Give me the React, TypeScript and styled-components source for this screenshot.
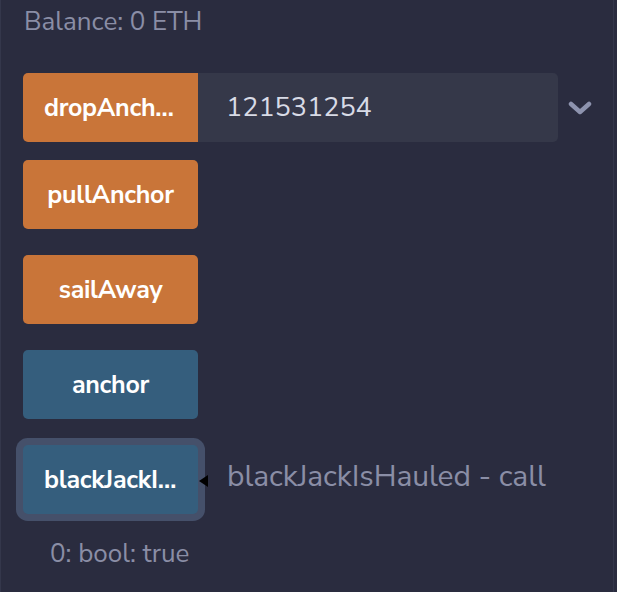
import React from "react";
import styled, { createGlobalStyle, css } from "styled-components";

const Global = createGlobalStyle`
  html, body { margin: 0; padding: 0; background: #2a2c3f; }
  body { font-family: "Nunito Sans", Lato, "Noto Sans", sans-serif; }
`;

const Panel = styled.div`
  box-sizing: border-box;
  width: 614px;
  height: 592px;
  background: #2a2c3f;
  border-left: 1px solid #34374b;
  border-right: 1px solid #34374b;
  padding: 7px 0 0 22px;
  display: flex;
  flex-direction: column;
`;

const Balance = styled.div`
  color: #8a8ea6;
  font-size: 26px;
  line-height: 30px;
  margin-left: 1px;
  margin-bottom: 36px;
`;

const List = styled.div`
  display: flex;
  flex-direction: column;
  gap: 26px;
`;

const Row = styled.div<{ $tight?: boolean }>`
  display: flex;
  align-items: center;
  height: 69px;
  ${(p) => p.$tight && css`margin-bottom: -8px;`}
`;

const ActionButton = styled.button<{ $kind: "tx" | "call"; $focused?: boolean; $joined?: boolean }>`
  box-sizing: border-box;
  width: 175px;
  height: 69px;
  flex: none;
  border: none;
  border-radius: ${(p) => (p.$joined ? "5px 0 0 5px" : "5px")};
  background: ${(p) => (p.$kind === "tx" ? "#c97539" : "#355e7d")};
  color: #ffffff;
  font-family: inherit;
  font-weight: 700;
  font-size: 25px;
  letter-spacing: -0.3px;
  padding: 0 21px;
  white-space: nowrap;
  overflow: hidden;
  text-overflow: ellipsis;
  ${(p) =>
    p.$focused &&
    css`
      box-shadow: 0 0 0 7px #45506a;
    `}
`;

const Input = styled.div`
  box-sizing: border-box;
  width: 360px;
  height: 69px;
  background: #353849;
  border-radius: 0 5px 5px 0;
  color: #d8dbe6;
  font-size: 27px;
  display: flex;
  align-items: center;
  padding-left: 28px;
`;

const Chevron = styled.svg`
  margin-left: 10px;
  width: 24px;
  height: 16px;
`;

const Caret = styled.span`
  width: 0;
  height: 0;
  border-top: 6px solid transparent;
  border-bottom: 6px solid transparent;
  border-right: 9px solid #000000;
  margin-left: 1px;
  margin-top: 3px;
`;

const CallLabel = styled.span`
  color: #8a8ea6;
  font-size: 30px;
  line-height: 1;
  letter-spacing: -0.1px;
  margin-left: 19px;
  margin-bottom: 6px;
`;

const Result = styled.div`
  color: #8a8ea6;
  font-size: 26px;
  margin: 22px 0 0 27px;
`;

export default function App() {
  return (
    <>
      <Global />
      <Panel>
        <Balance>Balance: 0 ETH</Balance>
        <List>
          <Row $tight>
            <ActionButton $kind="tx" $joined>dropAnchor</ActionButton>
            <Input>121531254</Input>
            <Chevron viewBox="0 0 24 16">
              <path d="M3 4 L12 12 L21 4" fill="none" stroke="#8d93ae" strokeWidth="4.5" strokeLinecap="round" strokeLinejoin="round" />
            </Chevron>
          </Row>
          <Row>
            <ActionButton $kind="tx">pullAnchor</ActionButton>
          </Row>
          <Row>
            <ActionButton $kind="tx">sailAway</ActionButton>
          </Row>
          <Row>
            <ActionButton $kind="call">anchor</ActionButton>
          </Row>
          <Row>
            <ActionButton $kind="call" $focused>blackJackIsHauled</ActionButton>
            <Caret />
            <CallLabel>blackJackIsHauled - call</CallLabel>
          </Row>
        </List>
        <Result>0: bool: true</Result>
      </Panel>
    </>
  );
}
